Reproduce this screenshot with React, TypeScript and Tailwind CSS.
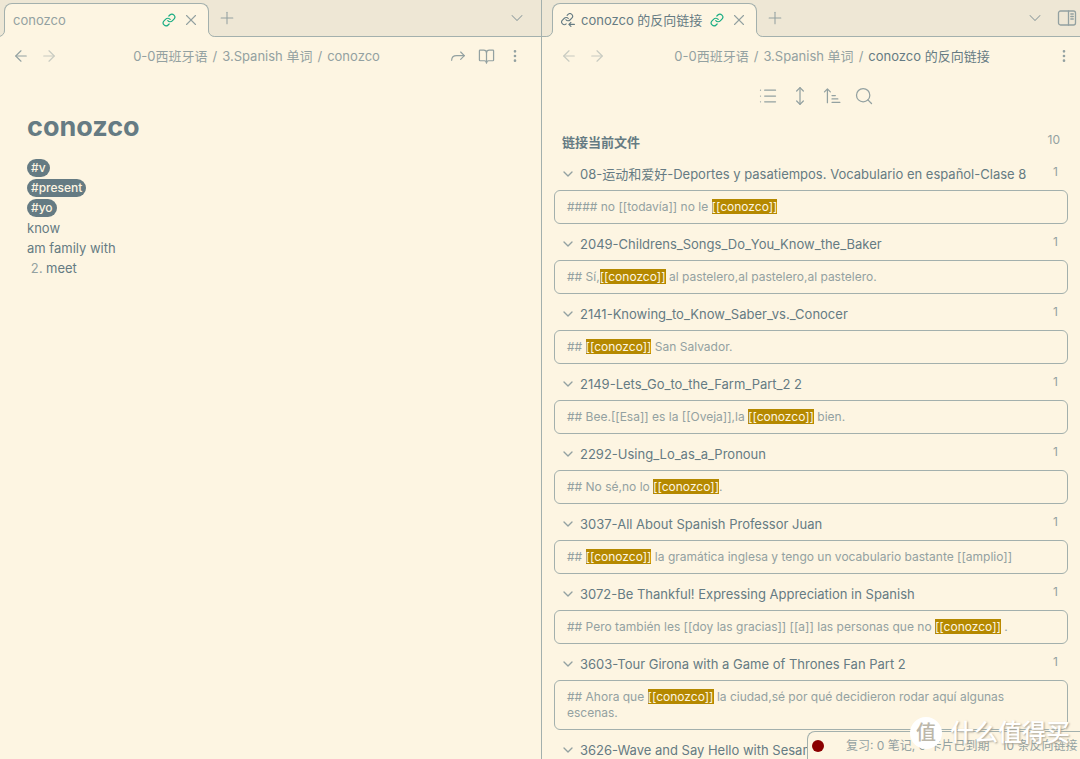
import { useState } from "react"
import type { ReactNode } from "react"
import {
  ArrowLeft,
  ArrowRight,
  BookOpen,
  ChevronDown,
  EllipsisVertical,
  Link,
  List,
  MoveVertical,
  Plus,
  Search,
  X,
} from "lucide-react"

type BacklinkItem = {
  title: string
  before: string
  after: string
}

const LINK_TEXT = "[[conozco]]"

const backlinks: BacklinkItem[] = [
  {
    title: "08-运动和爱好-Deportes y pasatiempos. Vocabulario en español-Clase 8",
    before: "#### no [[todavía]] no le ",
    after: "",
  },
  { title: "2049-Childrens_Songs_Do_You_Know_the_Baker", before: "## Sí,", after: " al pastelero,al pastelero,al pastelero." },
  { title: "2141-Knowing_to_Know_Saber_vs._Conocer", before: "## ", after: " San Salvador." },
  { title: "2149-Lets_Go_to_the_Farm_Part_2 2", before: "## Bee.[[Esa]] es la [[Oveja]],la ", after: " bien." },
  { title: "2292-Using_Lo_as_a_Pronoun", before: "## No sé,no lo ", after: "." },
  {
    title: "3037-All About Spanish Professor Juan",
    before: "## ",
    after: " la gramática inglesa y tengo un vocabulario bastante [[amplio]]",
  },
  {
    title: "3072-Be Thankful! Expressing Appreciation in Spanish",
    before: "## Pero también les [[doy las gracias]] [[a]] las personas que no ",
    after: " .",
  },
  {
    title: "3603-Tour Girona with a Game of Thrones Fan Part 2",
    before: "## Ahora que ",
    after: " la ciudad,sé por qué decidieron rodar aquí algunas escenas.",
  },
  { title: "3626-Wave and Say Hello with Sesame Street", before: "## ", after: "" },
]

const tags = ["#v", "#present", "#yo"]

const BacklinkIcon = () => (
  <svg width="14" height="14" viewBox="0 0 24 24" fill="none" stroke="currentColor" strokeWidth="1.900" strokeLinecap="round" strokeLinejoin="round">
    <path d="M8.500 11.500a4.500 4.500 0 0 0 6.800.5l3.200-3.200a4.500 4.500 0 0 0-6.400-6.400l-1.600 1.600" />
    <path d="M12.500 9.500a4.500 4.500 0 0 0-6.800-.5l-3.200 3.200a4.500 4.500 0 0 0 6.400 6.400" />
    <path d="M23 19.500h-9M17 16l-3.500 3.500 3.500 3.500" />
  </svg>
)

const ShareIcon = () => (
  <svg width="16" height="16" viewBox="0 0 24 24" fill="none" stroke="currentColor" strokeWidth="1.750" strokeLinecap="round" strokeLinejoin="round">
    <path d="M16 6l5.500 5.500L16 17" />
    <path d="M21.500 11.500H10c-4.500 0-7.500 2.500-7.500 7" />
  </svg>
)

const SortIcon = () => (
  <svg width="20" height="20" viewBox="0 0 24 24" fill="none" stroke="currentColor" strokeWidth="1.500" strokeLinecap="round" strokeLinejoin="round">
    <path d="M3 7l3.500-3.500L10 7M6.500 3.500V20" />
    <path d="M12 11.500h4M12 15.500h7M12 19.500h9.500" />
  </svg>
)

const SidebarIcon = () => (
  <svg width="20" height="18" viewBox="0 0 20 18" fill="none" stroke="currentColor" strokeWidth="1.300" strokeLinecap="round">
    <rect x="1.500" y="2" width="17" height="14" rx="2" />
    <path d="M11.500 2v14M13.800 5h2.500M13.800 7.500h2.500M13.800 10h2.500" />
  </svg>
)

// Curved foot that joins a tab to the line under the strip
const TabFoot = ({ side }: { side: "left" | "right" }) => (
  <svg
    className={side === "left" ? "absolute -left-2 bottom-0" : "absolute -right-2 bottom-0 -scale-x-100"}
    width="8"
    height="7"
    viewBox="0 0 8 7"
  >
    <path d="M0 6.500H1.500A6 6 0 0 0 7.500 0H8V7H0Z" fill="#fdf5e2" />
    <path d="M0 6.500H1.500A6 6 0 0 0 7.500 0" fill="none" stroke="#a3b0ad" />
  </svg>
)

const IconButton = ({ label, className = "", children }: { label: string; className?: string; children: ReactNode }) => (
  <button type="button" aria-label={label} className={`flex items-center justify-center cursor-pointer ${className}`}>
    {children}
  </button>
)

type TabStripProps = {
  title: string
  icon?: ReactNode
  className?: string
  titleClass: string
  trailing?: ReactNode
}

const TabStrip = ({ title, icon, className = "", titleClass, trailing }: TabStripProps) => (
  <div className={`flex h-[37px] items-end border-b border-[#a3b0ad] bg-[#eee7d5] ${className}`}>
    <div className="relative -mb-px flex h-[34px] w-[205px] shrink-0 items-center rounded-t-lg border border-b-0 border-[#a3b0ad] bg-[#fdf5e2] px-2 pb-0.5">
      <TabFoot side="left" />
      <TabFoot side="right" />
      {icon && <span className="mr-1.5 text-[#657b83]">{icon}</span>}
      <span className={`flex-1 whitespace-nowrap ${titleClass}`}>{title}</span>
      <Link size={14} className="mr-1.5 text-[#18ac82]" />
      <IconButton label="关闭">
        <X size={18} strokeWidth={1.5} />
      </IconButton>
    </div>
    <IconButton label="新标签页" className="ml-2 h-9 w-5">
      <Plus size={20} strokeWidth={1.25} />
    </IconButton>
    <div className="ml-auto flex h-9 items-center">
      <IconButton label="标签页列表">
        <ChevronDown size={20} strokeWidth={1.25} />
      </IconButton>
      {trailing}
    </div>
  </div>
)

const Breadcrumb = ({ current, currentClass = "" }: { current: string; currentClass?: string }) => (
  <nav className="flex flex-1 justify-center gap-[5px] whitespace-nowrap">
    <a href="#root">0-0西班牙语</a>
    <span>/</span>
    <a href="#folder">3.Spanish 单词</a>
    <span>/</span>
    <span className={currentClass}>{current}</span>
  </nav>
)

const NotePane = () => (
  <section className="flex w-[calc(50%+2px)] shrink-0 flex-col border-r border-[#a3b0ad]">
    <TabStrip title="conozco" titleClass="" className="pr-3.5 pl-1" />
    <header className="flex h-[38px] items-center px-3">
      <div className="flex w-[58px] gap-2.5">
        <IconButton label="后退">
          <ArrowLeft size={18} strokeWidth={1.5} />
        </IconButton>
        <IconButton label="前进" className="opacity-50">
          <ArrowRight size={18} strokeWidth={1.5} />
        </IconButton>
      </div>
      <Breadcrumb current="conozco" />
      <div className="flex w-[86px] items-center justify-end gap-3 pr-1.5">
        <IconButton label="分享">
          <ShareIcon />
        </IconButton>
        <IconButton label="阅读视图">
          <BookOpen size={17} strokeWidth={1.75} />
        </IconButton>
        <IconButton label="更多选项">
          <EllipsisVertical size={16} />
        </IconButton>
      </div>
    </header>
    <article className="px-[27px] pt-[34px] text-[#657b83]">
      <h1 className="mb-[13px] text-[27px] leading-9 font-bold">conozco</h1>
      {tags.map((tag) => (
        <div key={tag} className="flex h-5 items-center">
          <a href={tag} className="rounded-full bg-[#657b83] px-1 text-xs leading-[18px] font-medium text-[#fdf5e2]">
            {tag}
          </a>
        </div>
      ))}
      <p className="leading-5">know</p>
      <p className="leading-5">am family with</p>
      <ol start={2} className="list-decimal pl-[19px] leading-5 marker:text-[#93a1a1]">
        <li>meet</li>
      </ol>
    </article>
  </section>
)

const Backlink = ({ title, before, after }: BacklinkItem) => {
  const [open, setOpen] = useState(true)

  return (
    <li>
      <button
        type="button"
        aria-expanded={open}
        onClick={() => setOpen(!open)}
        className="flex h-9 w-full cursor-pointer items-center pt-1 pr-2.5 pl-1.5 text-left"
      >
        <ChevronDown size={16} strokeWidth={2} className="mr-1 shrink-0" />
        <span className="flex-1 whitespace-nowrap text-[#657b83]">{title}</span>
        <span className="mb-1 text-xs">1</span>
      </button>
      {open && (
        <div className="rounded-md border border-[#a3b0ad] py-2 pr-8 pl-3 text-xs leading-4">
          {before}
          <mark className="bg-[#b58900] text-[#fdf5e2]">{LINK_TEXT}</mark>
          {after}
        </div>
      )}
    </li>
  )
}

const BacklinksPane = () => (
  <section className="flex min-w-0 flex-1 flex-col">
    <TabStrip
      title="conozco 的反向链接"
      titleClass="text-[#657b83]"
      icon={<BacklinkIcon />}
      className="pr-[3px] pl-2.5"
      trailing={
        <IconButton label="切换侧边栏" className="ml-3">
          <SidebarIcon />
        </IconButton>
      }
    />
    <header className="flex h-[38px] shrink-0 items-center pr-2 pl-[18px]">
      <div className="flex w-[50px] gap-2.5 opacity-50">
        <IconButton label="后退">
          <ArrowLeft size={18} strokeWidth={1.5} />
        </IconButton>
        <IconButton label="前进">
          <ArrowRight size={18} strokeWidth={1.5} />
        </IconButton>
      </div>
      <Breadcrumb current="conozco 的反向链接" currentClass="text-[#657b83]" />
      <div className="flex w-[18px] justify-end">
        <IconButton label="更多选项">
          <EllipsisVertical size={16} />
        </IconButton>
      </div>
    </header>
    <div className="flex h-[42px] shrink-0 items-center justify-center gap-3 pl-2.5">
      <IconButton label="折叠结果">
        <List size={20} strokeWidth={1.5} />
      </IconButton>
      <IconButton label="显示更多上下文">
        <MoveVertical size={20} strokeWidth={1.5} />
      </IconButton>
      <IconButton label="更改排序">
        <SortIcon />
      </IconButton>
      <IconButton label="搜索">
        <Search size={20} strokeWidth={1.5} />
      </IconButton>
    </div>
    <div className="px-3 pt-[13px]">
      <div className="flex h-6 items-center justify-between px-2">
        <h2 className="font-bold text-[#657b83]">链接当前文件</h2>
        <span className="mb-1 text-xs">10</span>
      </div>
      <ul>
        {backlinks.map((item) => (
          <Backlink key={item.title} {...item} />
        ))}
      </ul>
    </div>
  </section>
)

const StatusBar = () => (
  <footer className="absolute right-0 bottom-0 flex h-7 w-[273px] items-center overflow-hidden rounded-tl-lg border-t border-l border-[#a3b0ad] bg-[#fdf5e2] pl-1 text-xs whitespace-nowrap">
    <span className="mr-[22px] size-3 shrink-0 rounded-full bg-[#8b0000]" />
    <span className="mr-3">复习: 0 笔记, 0 卡片已到期</span>
    <span>10 条反向链接</span>
  </footer>
)

const Watermark = () => (
  <div className="absolute right-2.5 bottom-2.5 flex items-center gap-2 text-white">
    <span className="flex size-8 items-center justify-center rounded-full bg-white text-xl font-medium text-[#bcb7aa]">值</span>
    <span className="text-2xl leading-8 font-medium [text-shadow:1px_1px_2px_#a8a294]">什么值得买</span>
  </div>
)

const App = () => {
  return (
    <main className="relative flex h-screen overflow-hidden bg-[#fdf5e2] font-['Inter','Noto_Sans_CJK_SC',sans-serif] text-[13px] leading-5 text-[#93a1a1]">
      <NotePane />
      <BacklinksPane />
      <StatusBar />
      <Watermark />
    </main>
  )
}

export default App
